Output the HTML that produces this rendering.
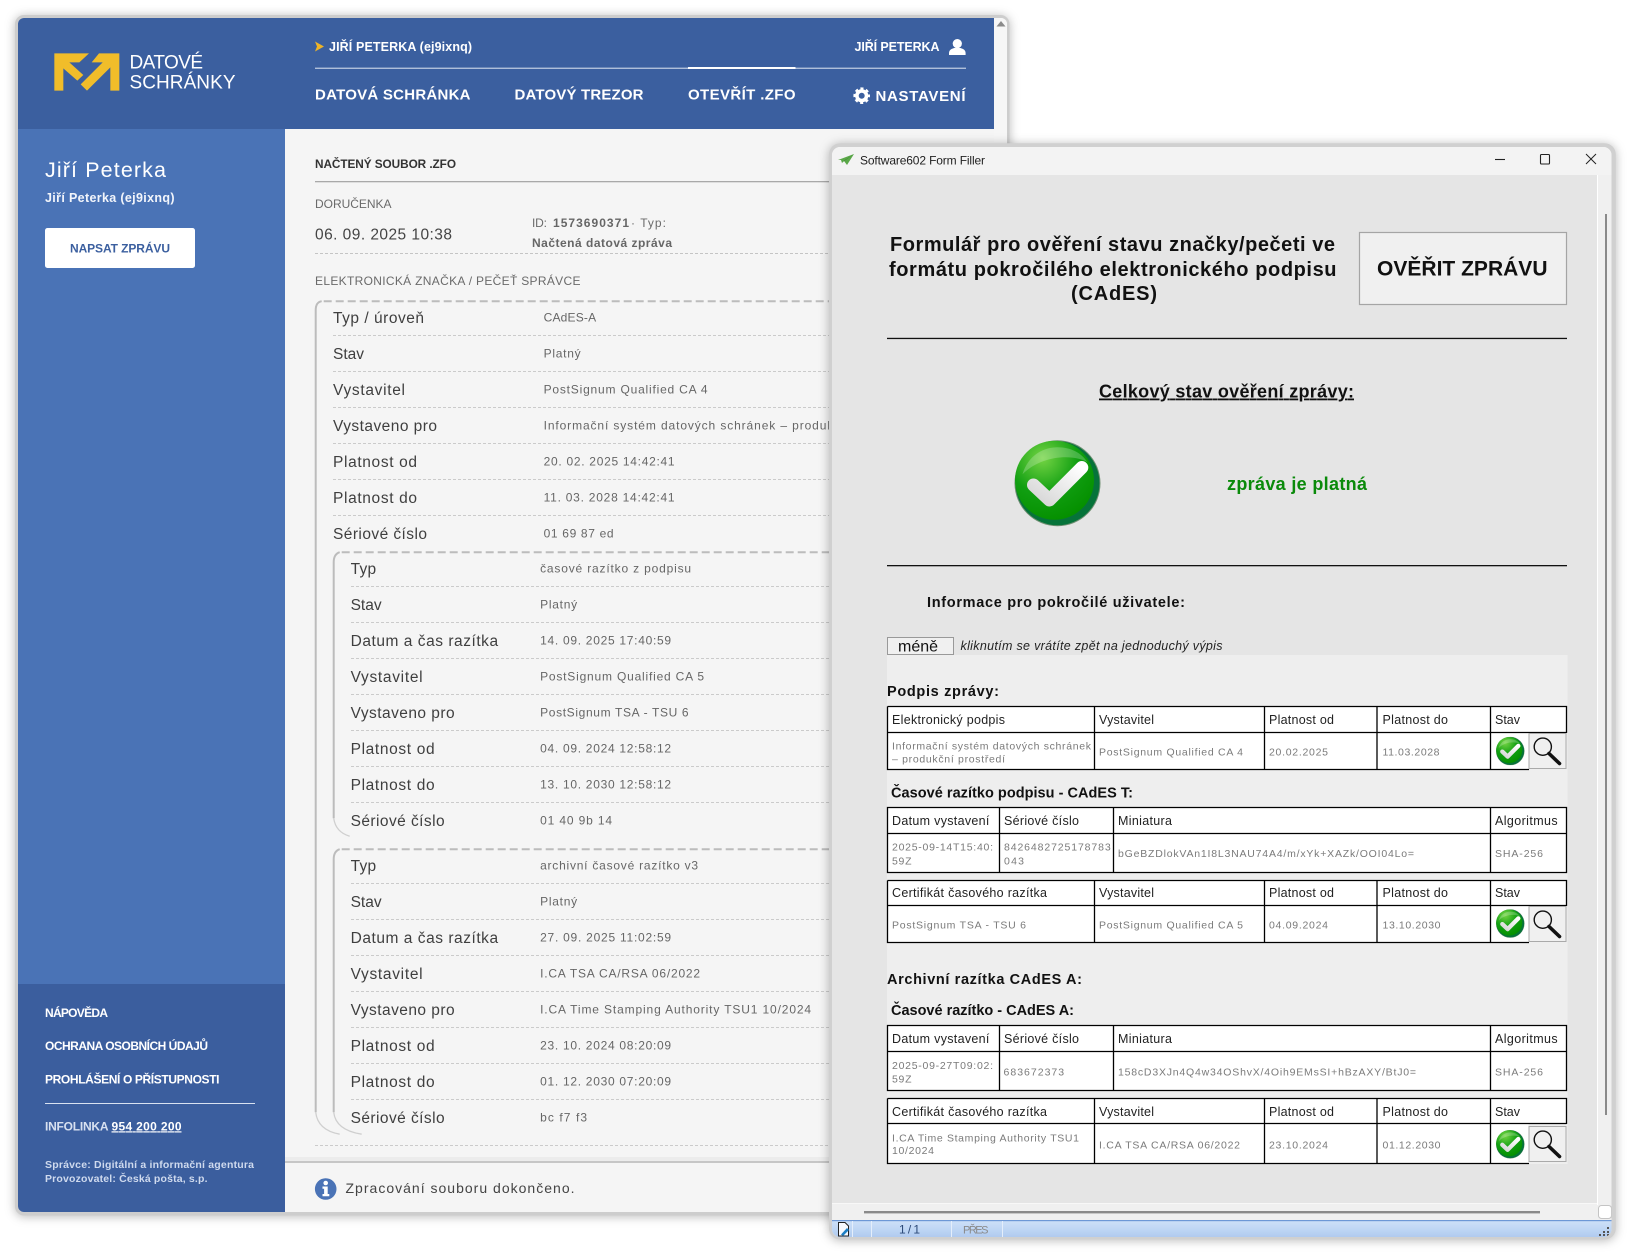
<!DOCTYPE html>
<html lang="cs"><head><meta charset="utf-8"><title>Datové schránky</title>
<style>
html,body{margin:0;padding:0;background:#fff}
svg{display:block}
text{font-family:"Liberation Sans",sans-serif;white-space:pre}
.b{font-weight:700}
.w{fill:#fff}
.l{font-size:15.5px;fill:#3f3f3f;transform:translate(-.4px,-.7px)}
.v{font-size:12px;fill:#666;transform:translate(-.4px,-.7px)}
.h{font-size:12.5px;fill:#222}
.c{font-size:10.5px;fill:#7a7a7a}
.t{font-size:14.5px;font-weight:700;fill:#111}
.win{filter:drop-shadow(0 1px 5px rgba(0,0,0,.28))}
</style></head><body>
<svg xmlns="http://www.w3.org/2000/svg" width="1639" height="1255" viewBox="0 0 1639 1255">
<defs>
<clipPath id="ca"><rect x="18" y="18" width="989" height="1194" rx="6"/></clipPath>
<clipPath id="cb"><rect x="832" y="147" width="779.500" height="1090" rx="8"/></clipPath>
<radialGradient id="gg" cx=".35" cy=".22" r=".8"><stop offset="0" stop-color="#74d444"/><stop offset=".55" stop-color="#119f12"/><stop offset="1" stop-color="#059000"/></radialGradient>
<linearGradient id="gw" x1="0" y1="1" x2="1" y2="0"><stop offset="0" stop-color="#d6d6d6"/><stop offset="1" stop-color="#fff"/></linearGradient>
<linearGradient id="gs" x1="0" y1="0" x2="0" y2="1"><stop offset="0" stop-color="#cfe1f8"/><stop offset=".6" stop-color="#bdd5f4"/><stop offset="1" stop-color="#b0caef"/></linearGradient>
<symbol id="chk" viewBox="0 0 86 86">
<circle cx="43" cy="43" r="43" fill="#6f8f72"/>
<circle cx="43" cy="43" r="42" fill="#06733a"/>
<circle cx="40" cy="40" r="39.5" fill="url(#gg)"/>
<path d="M8 34C14 14 30 7 43 7c14 0 24 6 30 15C60 14 28 14 8 34z" fill="#fff" opacity=".22"/>
<path d="M19 44.7L35 59.7 67.3 27.3" fill="none" stroke="url(#gw)" stroke-width="13" stroke-linecap="round" stroke-linejoin="round"/>
</symbol>
<symbol id="mag" viewBox="0 0 38 36">
<rect x=".5" y=".5" width="37" height="35" fill="#f0f0f0" stroke="#aaa"/>
<circle cx="14.3" cy="13.7" r="8.6" fill="none" stroke="#111" stroke-width="1.4"/>
<path d="M20.5 20.5L31 30.5" stroke="#111" stroke-width="3.6" stroke-linecap="round"/>
</symbol>
</defs>

<!-- Window A -->
<rect class="win" x="15" y="15" width="994.500" height="1200.500" rx="9" fill="#cdcdcd"/>
<g clip-path="url(#ca)">
<rect x="18" y="18" width="989" height="1194" fill="#f5f5f5"/>
<rect x="994" y="18" width="13" height="1194" fill="#f6f6f6"/>
<path d="M1001 21l4.5 5.5h-9z" fill="#8a8a8a"/>
<rect x="18" y="18" width="976" height="111" fill="#3b5f9f"/>
<rect x="18" y="129" width="267" height="855" fill="#4a73b6"/>
<rect x="18" y="984" width="267" height="228" fill="#3b5e9e"/>
</g>

<!-- logo -->
<g transform="translate(40 40) scale(.33333)" fill="#f1bd2a">
<path d="M43 40H147L118 67H88L130 105 112 122 70 85V152H43z"/>
<path d="M177 40H238V152H211V82L141 152 122 133 188 67H155z"/>
</g>
<text class="w" x="129.500" y="68.500" font-size="19" textLength="73.500">DATOVÉ</text>
<text class="w" x="129.500" y="88.500" font-size="19" textLength="106">SCHRÁNKY</text>

<!-- header -->
<path d="M315 41.500l9 5-9 5 2-5z" fill="#eeb428"/>
<text class="b w" x="329" y="51" font-size="12.500" textLength="143">JIŘÍ PETERKA (ej9ixnq)</text>
<text class="b w" x="854.500" y="51" font-size="12.500" textLength="85">JIŘÍ PETERKA</text>
<circle cx="957.300" cy="43.600" r="4.600" fill="#fff"/>
<path d="M949 55v-2c0-3.600 4-5.200 8.300-5.200s8.300 1.600 8.300 5.200v2z" fill="#fff"/>
<rect x="315" y="67.700" width="651" height="1" fill="#dfe6f2"/>
<rect x="688" y="67" width="107.500" height="2" fill="#fff"/>
<text class="b w" x="315" y="99.500" font-size="15" textLength="155.500">DATOVÁ SCHRÁNKA</text>
<text class="b w" x="514.500" y="99.500" font-size="15" textLength="129">DATOVÝ TREZOR</text>
<text class="b w" x="688" y="99.500" font-size="15" textLength="107.500">OTEVŘÍT .ZFO</text>
<text class="b w" x="875.500" y="101" font-size="15" textLength="90">NASTAVENÍ</text>
<circle cx="861.700" cy="95.700" r="4.800" fill="none" stroke="#fff" stroke-width="3.600"/>
<circle cx="861.700" cy="95.700" r="7" fill="none" stroke="#fff" stroke-width="2.600" stroke-dasharray="3 2.500" stroke-dashoffset="1.500"/>

<!-- sidebar -->
<text class="w" x="45" y="177" font-size="21.500" textLength="121">Jiří Peterka</text>
<text class="b" x="45" y="202" font-size="12.500" fill="#f2f5fb" textLength="129.500">Jiří Peterka (ej9ixnq)</text>
<rect x="45" y="228" width="150" height="40" rx="2.500" fill="#fff"/>
<text class="b" x="70" y="252.500" font-size="12" fill="#3b5f9f" textLength="100">NAPSAT ZPRÁVU</text>
<text class="b w" x="45" y="1017" font-size="12" textLength="63">NÁPOVĚDA</text>
<text class="b w" x="45" y="1050" font-size="12" textLength="163">OCHRANA OSOBNÍCH ÚDAJŮ</text>
<text class="b w" x="45" y="1083.300" font-size="12" textLength="174.500">PROHLÁŠENÍ O PŘÍSTUPNOSTI</text>
<rect x="45" y="1103" width="210" height="1" fill="#d9e2f1"/>
<text class="b" x="45" y="1130.300" font-size="12" fill="#d7e0f0" textLength="63.500">INFOLINKA</text>
<text class="b w" x="111.500" y="1130.300" font-size="12" text-decoration="underline" textLength="70">954 200 200</text>
<text class="b" x="45" y="1168" font-size="10.500" fill="#cfdaee" textLength="209">Správce: Digitální a informační agentura</text>
<text class="b" x="45" y="1182" font-size="10.500" fill="#cfdaee" textLength="162.500">Provozovatel: Česká pošta, s.p.</text>

<!-- main content -->
<text class="b" x="315" y="167.800" font-size="11.800" fill="#333" textLength="141">NAČTENÝ SOUBOR .ZFO</text>
<rect x="315" y="181" width="520" height="1.300" fill="#a9a9a9"/>
<text x="315" y="208" font-size="12" fill="#6a6a6a" textLength="76.500">DORUČENKA</text>
<text x="315" y="239.500" font-size="15.500" fill="#444" textLength="137">06. 09. 2025 10:38</text>
<text x="532" y="227" font-size="12" fill="#6a6a6a" textLength="15">ID:</text>
<text class="b" x="553" y="227" font-size="12" fill="#666" textLength="76">1573690371</text>
<text x="631" y="227" font-size="12" fill="#6a6a6a" textLength="35">· Typ:</text>
<text class="b" x="532" y="247" font-size="12" fill="#666" textLength="140">Načtená datová zpráva</text>
<path d="M315 253.500H835" stroke="#c4c4c4" stroke-dasharray="3 2"/>
<text x="315" y="285" font-size="12" fill="#6a6a6a" textLength="265.500">ELEKTRONICKÁ ZNAČKA / PEČEŤ SPRÁVCE</text>

<g fill="none" stroke="#bcbcbc" stroke-width="2" transform="translate(-.3 -.8)">
<path d="M324 302H835" stroke-dasharray="8 4"/>
<path d="M316 1113V311Q316 303 322 302"/>
<path d="M342 553H835" stroke-dasharray="8 4"/>
<path d="M334 819V563Q334 555 340 553"/>
<path d="M342 850H835" stroke-dasharray="8 4"/>
<path d="M334 1113V860Q334 852 340 850"/>
<path d="M316 1113Q318 1131 340 1135" stroke-width="1.300" stroke="#cfcfcf"/>
<path d="M334 1113Q336 1131 362 1135" stroke-width="1.300" stroke="#cfcfcf"/>
<path d="M334 819Q336 833 350 837" stroke-width="1.300" stroke="#cfcfcf"/>
</g>
<g stroke="#cbcbcb" stroke-dasharray="3 2">
<path d="M333 335.500H835M333 371.500H835M333 407.500H835M333 443.500H835M333 479.500H835M333 515.500H835"/>
<path d="M351 586.500H835M351 622.500H835M351 658.500H835M351 694.500H835M351 730.500H835M351 766.500H835M351 802.500H835"/>
<path d="M351 883.500H835M351 919.500H835M351 955.500H835M351 991.500H835M351 1027.500H835M351 1063.500H835M351 1099.500H835"/>
<path d="M315 1145.500H835"/>
</g>

<text class="l" x="333.400" y="323.500" textLength="91">Typ / úroveň</text>
<text class="l" x="333.400" y="359.500" textLength="31">Stav</text>
<text class="l" x="333.400" y="395.500" textLength="72">Vystavitel</text>
<text class="l" x="333.400" y="431.500" textLength="104">Vystaveno pro</text>
<text class="l" x="333.400" y="467.500" textLength="84">Platnost od</text>
<text class="l" x="333.400" y="503.500" textLength="84">Platnost do</text>
<text class="l" x="333.400" y="539.500" textLength="94">Sériové číslo</text>

<text class="l" x="351" y="574.500" textLength="25.500">Typ</text>
<text class="l" x="351" y="610.500" textLength="31">Stav</text>
<text class="l" x="351" y="646.500" textLength="147.500">Datum a čas razítka</text>
<text class="l" x="351" y="682.500" textLength="72">Vystavitel</text>
<text class="l" x="351" y="718.500" textLength="104">Vystaveno pro</text>
<text class="l" x="351" y="754.500" textLength="84">Platnost od</text>
<text class="l" x="351" y="790.500" textLength="84">Platnost do</text>
<text class="l" x="351" y="826.500" textLength="94">Sériové číslo</text>

<text class="l" x="351" y="871.500" textLength="25.500">Typ</text>
<text class="l" x="351" y="907.500" textLength="31">Stav</text>
<text class="l" x="351" y="943.500" textLength="147.500">Datum a čas razítka</text>
<text class="l" x="351" y="979.500" textLength="72">Vystavitel</text>
<text class="l" x="351" y="1015.500" textLength="104">Vystaveno pro</text>
<text class="l" x="351" y="1051.500" textLength="84">Platnost od</text>
<text class="l" x="351" y="1087.500" textLength="84">Platnost do</text>
<text class="l" x="351" y="1123.500" textLength="94">Sériové číslo</text>

<text class="v" x="544" y="322.300" textLength="52.500">CAdES-A</text>
<text class="v" x="544" y="358.300" textLength="37">Platný</text>
<text class="v" x="544" y="394.300" textLength="164">PostSignum Qualified CA 4</text>
<text class="v" x="544" y="430.300" textLength="368">Informační systém datových schránek – produkční prostředí</text>
<text class="v" x="544" y="466.300" textLength="131">20. 02. 2025 14:42:41</text>
<text class="v" x="544" y="502.300" textLength="131">11. 03. 2028 14:42:41</text>
<text class="v" x="544" y="538.300" textLength="70">01 69 87 ed</text>

<text class="v" x="540.500" y="573.300" textLength="151">časové razítko z podpisu</text>
<text class="v" x="540.500" y="609.300" textLength="37">Platný</text>
<text class="v" x="540.500" y="645.300" textLength="131">14. 09. 2025 17:40:59</text>
<text class="v" x="540.500" y="681.300" textLength="164">PostSignum Qualified CA 5</text>
<text class="v" x="540.500" y="717.300" textLength="148.500">PostSignum TSA - TSU 6</text>
<text class="v" x="540.500" y="753.300" textLength="131">04. 09. 2024 12:58:12</text>
<text class="v" x="540.500" y="789.300" textLength="131">13. 10. 2030 12:58:12</text>
<text class="v" x="540.500" y="825.300" textLength="72">01 40 9b 14</text>

<text class="v" x="540.500" y="870.300" textLength="158">archivní časové razítko v3</text>
<text class="v" x="540.500" y="906.300" textLength="37">Platný</text>
<text class="v" x="540.500" y="942.300" textLength="131">27. 09. 2025 11:02:59</text>
<text class="v" x="540.500" y="978.300" textLength="160">I.CA TSA CA/RSA 06/2022</text>
<text class="v" x="540.500" y="1014.300" textLength="271">I.CA Time Stamping Authority TSU1 10/2024</text>
<text class="v" x="540.500" y="1050.300" textLength="131">23. 10. 2024 08:20:09</text>
<text class="v" x="540.500" y="1086.300" textLength="131">01. 12. 2030 07:20:09</text>
<text class="v" x="540.500" y="1122.300" textLength="47">bc f7 f3</text>

<!-- status footer -->
<rect x="285" y="1157" width="550" height="4" fill="#ececec"/>
<rect x="285" y="1161" width="550" height="2" fill="#c6c6c6"/>
<circle cx="325.700" cy="1189" r="10.800" fill="#4a73b6"/>
<circle cx="325.700" cy="1183" r="2.300" fill="#fff"/>
<path d="M322.500 1186.500h5.200v7.500h1.600v2.300h-6.800V1194h1.600v-5.200h-1.600z" fill="#fff"/>
<text x="345.500" y="1193" font-size="14" fill="#444" textLength="229">Zpracování souboru dokončeno.</text>

<!-- Window B -->
<rect class="win" x="829" y="143.300" width="786.800" height="1096.200" rx="11" fill="#d0d0d0"/>
<g clip-path="url(#cb)">
<rect x="832" y="147" width="779.500" height="1090" fill="#f0f0f0"/>
<rect x="832" y="147" width="779.500" height="28" fill="#f3f3f3"/>
<rect x="832" y="175" width="765" height="1028" fill="#e5e5e5"/>
<rect x="1597" y="175" width="1" height="1030" fill="#fff"/>
<rect x="832" y="1203" width="765" height="1" fill="#f8f8f8"/>
<rect x="1605" y="214" width="2" height="901" fill="#8a8a8a"/>
<rect x="864" y="1211" width="676" height="2.400" fill="#8a8a8a"/>
<rect x="1598.500" y="1205.500" width="13" height="13" rx="3" fill="#fff" stroke="#c4c4c4"/>
<rect x="832" y="1220" width="779.500" height="17" fill="url(#gs)"/>
<rect x="832" y="1220" width="779.500" height="1.200" fill="#6d98d6"/>
<path d="M852.500 1221v16M871.500 1221v16M951.500 1221v16M1002.500 1221v16" stroke="#e4eefb"/>
<g fill="#555"><rect x="1607" y="1227" width="2" height="2"/><rect x="1603" y="1231" width="2" height="2"/><rect x="1607" y="1231" width="2" height="2"/><rect x="1599" y="1234" width="2" height="2"/><rect x="1603" y="1234" width="2" height="2"/><rect x="1607" y="1234" width="2" height="2"/></g>
</g>
<path d="M838.500 1222.500h6.500l3.500 3.500v10h-10z" fill="#f6f9fe" stroke="#222"/>
<path d="M841 1234.500l6-6.500 2 2-6 6z" fill="#1d7fc4"/>
<text x="899" y="1233.300" font-size="12" fill="#2c4a78" textLength="21">1 / 1</text>
<text x="963" y="1233.300" font-size="11" fill="#8a8a8a" textLength="25.500">PŘES</text>

<!-- titlebar -->
<path d="M838 160l16-6-7 11-3-4-2 2-1-3z" fill="#5aa848"/>
<path d="M842 162.500l12-8.500-9 6z" fill="#2f6a26"/>
<text x="860" y="164.300" font-size="12" fill="#222" textLength="125">Software602 Form Filler</text>
<path d="M1495 159.500h10" stroke="#222" stroke-width="1.100"/>
<rect x="1540.500" y="154.500" width="9" height="9.500" rx="1" fill="none" stroke="#222" stroke-width="1.100"/>
<path d="M1586 154l10 10M1596 154l-10 10" stroke="#222" stroke-width="1"/>

<!-- form heading -->
<text class="b" x="890" y="251" font-size="20" fill="#111" textLength="445">Formulář pro ověření stavu značky/pečeti ve</text>
<text class="b" x="889" y="276" font-size="20" fill="#111" textLength="447.500">formátu pokročilého elektronického podpisu</text>
<text class="b" x="1071" y="300" font-size="20" fill="#111" textLength="86">(CAdES)</text>
<rect x="1359.500" y="232.500" width="207" height="72" fill="#f0f0f0" stroke="#a5a5a5" stroke-width="1.200"/>
<text class="b" x="1377" y="275.500" font-size="21" fill="#111" textLength="170.500">OVĚŘIT ZPRÁVU</text>
<rect x="887" y="337.800" width="680" height="1.300" fill="#111"/>
<text class="b" x="1099" y="397.500" font-size="18" fill="#111" text-decoration="underline" textLength="255">Celkový stav ověření zprávy:</text>
<use href="#chk" x="1014.500" y="440" width="86" height="86.500"/>
<text class="b" x="1227" y="490" font-size="18" fill="#0a8a0a" textLength="140">zpráva je platná</text>
<rect x="887" y="565" width="680" height="1.300" fill="#111"/>
<text class="b" x="927" y="607" font-size="14.500" fill="#111" textLength="258">Informace pro pokročilé uživatele:</text>

<rect x="887.500" y="637.500" width="66" height="17" fill="#f0f0f0" stroke="#999"/>
<text x="898" y="651.500" font-size="16" fill="#111" textLength="40">méně</text>
<text x="960.500" y="650.200" font-size="12.500" font-style="italic" fill="#222" textLength="262">kliknutím se vrátíte zpět na jednoduchý výpis</text>
<rect x="887" y="655" width="680.500" height="509" fill="#eeeeee"/>

<text class="t" x="887" y="696" textLength="112">Podpis zprávy:</text>
<!-- T1 -->
<rect x="887.500" y="706.500" width="641" height="63" fill="#fff"/><rect x="1490" y="706.500" width="76.500" height="26" fill="#fff"/>
<path d="M887.500 706.500H1566.500V733M887.500 706.500V769.500H1529M887.500 732.500H1566.500M1094.500 706.500V769.500M1264.500 706.500V769.500M1377 706.500V769.500M1490.500 706.500V769.500" fill="none" stroke="#000" stroke-width="1.300"/>
<text class="h" x="892" y="724.200" textLength="113">Elektronický podpis</text>
<text class="h" x="1099" y="724.200" textLength="55">Vystavitel</text>
<text class="h" x="1269" y="724.200" textLength="65">Platnost od</text>
<text class="h" x="1382.500" y="724.200" textLength="65.500">Platnost do</text>
<text class="h" x="1495" y="724.200" textLength="25">Stav</text>
<text class="c" x="892" y="749.500" textLength="199">Informační systém datových schránek</text>
<text class="c" x="892" y="762.500" textLength="113">– produkční prostředí</text>
<text class="c" x="1099" y="755.500" textLength="144">PostSignum Qualified CA 4</text>
<text class="c" x="1269" y="755.500" textLength="59">20.02.2025</text>
<text class="c" x="1382.500" y="755.500" textLength="57">11.03.2028</text>
<use href="#chk" x="1496" y="736.800" width="28.500" height="28.500"/>
<use href="#mag" x="1528.500" y="733" width="38" height="36"/>

<text class="t" x="891" y="797.500" textLength="242">Časové razítko podpisu - CAdES T:</text>
<!-- T2 -->
<rect x="887.500" y="807.500" width="679" height="65" fill="#fff"/>
<path d="M887.500 807.500H1566.500V872.500H887.500ZM887.500 833.500H1566.500M999.500 807.500V872.500M1113.500 807.500V872.500M1490.500 807.500V872.500" fill="none" stroke="#000" stroke-width="1.300"/>
<text class="h" x="892" y="825.200" textLength="97.400">Datum vystavení</text>
<text class="h" x="1004" y="825.200" textLength="75">Sériové číslo</text>
<text class="h" x="1118" y="825.200" textLength="54">Miniatura</text>
<text class="h" x="1495" y="825.200" textLength="62.600">Algoritmus</text>
<text class="c" x="892" y="850.500" textLength="101">2025-09-14T15:40:</text>
<text class="c" x="892" y="864.500" textLength="19.500">59Z</text>
<text class="c" x="1004" y="850.500" textLength="106.700">8426482725178783</text>
<text class="c" x="1004" y="864.500" textLength="20">043</text>
<text class="c" x="1118" y="857" textLength="296">bGeBZDlokVAn1I8L3NAU74A4/m/xYk+XAZk/OOI04Lo=</text>
<text class="c" x="1495" y="857" textLength="48">SHA-256</text>
<!-- T3 -->
<rect x="887.500" y="880.500" width="641" height="62" fill="#fff"/><rect x="1490" y="880.500" width="76.500" height="25" fill="#fff"/>
<path d="M887.500 880.500H1566.500V906M887.500 880.500V942.500H1529M887.500 905.500H1566.500M1094.500 880.500V942.500M1264.500 880.500V942.500M1377 880.500V942.500M1490.500 880.500V942.500" fill="none" stroke="#000" stroke-width="1.300"/>
<text class="h" x="892" y="897.200" textLength="155">Certifikát časového razítka</text>
<text class="h" x="1099" y="897.200" textLength="55">Vystavitel</text>
<text class="h" x="1269" y="897.200" textLength="65">Platnost od</text>
<text class="h" x="1382.500" y="897.200" textLength="65.500">Platnost do</text>
<text class="h" x="1495" y="897.200" textLength="25">Stav</text>
<text class="c" x="892" y="928.500" textLength="134">PostSignum TSA - TSU 6</text>
<text class="c" x="1099" y="928.500" textLength="144">PostSignum Qualified CA 5</text>
<text class="c" x="1269" y="928.500" textLength="59">04.09.2024</text>
<text class="c" x="1382.500" y="928.500" textLength="58">13.10.2030</text>
<use href="#chk" x="1496" y="909.300" width="28.500" height="28.500"/>
<use href="#mag" x="1528.500" y="906" width="38" height="36"/>

<text class="t" x="887" y="984.200" textLength="195">Archivní razítka CAdES A:</text>
<text class="t" x="891" y="1015" textLength="183">Časové razítko - CAdES A:</text>
<!-- T4 -->
<rect x="887.500" y="1025.500" width="679" height="65" fill="#fff"/>
<path d="M887.500 1025.500H1566.500V1090.500H887.500ZM887.500 1051.500H1566.500M999.500 1025.500V1090.500M1113.500 1025.500V1090.500M1490.500 1025.500V1090.500" fill="none" stroke="#000" stroke-width="1.300"/>
<text class="h" x="892" y="1043.200" textLength="97.400">Datum vystavení</text>
<text class="h" x="1004" y="1043.200" textLength="75">Sériové číslo</text>
<text class="h" x="1118" y="1043.200" textLength="54">Miniatura</text>
<text class="h" x="1495" y="1043.200" textLength="62.600">Algoritmus</text>
<text class="c" x="892" y="1069" textLength="101">2025-09-27T09:02:</text>
<text class="c" x="892" y="1082.500" textLength="19.500">59Z</text>
<text class="c" x="1003.500" y="1075.500" textLength="60.600">683672373</text>
<text class="c" x="1118" y="1075.500" textLength="298">158cD3XJn4Q4w34OShvX/4Oih9EMsSI+hBzAXY/BtJ0=</text>
<text class="c" x="1495" y="1075.500" textLength="48">SHA-256</text>
<!-- T5 -->
<rect x="887.500" y="1098.500" width="641" height="65" fill="#fff"/><rect x="1490" y="1098.500" width="76.500" height="25" fill="#fff"/>
<path d="M887.500 1098.500H1566.500V1124M887.500 1098.500V1163.500H1529M887.500 1123.500H1566.500M1094.500 1098.500V1163.500M1264.500 1098.500V1163.500M1377 1098.500V1163.500M1490.500 1098.500V1163.500" fill="none" stroke="#000" stroke-width="1.300"/>
<text class="h" x="892" y="1116.200" textLength="155">Certifikát časového razítka</text>
<text class="h" x="1099" y="1116.200" textLength="55">Vystavitel</text>
<text class="h" x="1269" y="1116.200" textLength="65">Platnost od</text>
<text class="h" x="1382.500" y="1116.200" textLength="65.500">Platnost do</text>
<text class="h" x="1495" y="1116.200" textLength="25">Stav</text>
<text class="c" x="892" y="1141.500" textLength="187">I.CA Time Stamping Authority TSU1</text>
<text class="c" x="892" y="1154" textLength="42">10/2024</text>
<text class="c" x="1099" y="1148.500" textLength="141">I.CA TSA CA/RSA 06/2022</text>
<text class="c" x="1269" y="1148.500" textLength="59">23.10.2024</text>
<text class="c" x="1382.500" y="1148.500" textLength="58">01.12.2030</text>
<use href="#chk" x="1496" y="1130" width="28.500" height="28.500"/>
<use href="#mag" x="1528.500" y="1125.500" width="38" height="37"/>
</svg>
</body></html>
